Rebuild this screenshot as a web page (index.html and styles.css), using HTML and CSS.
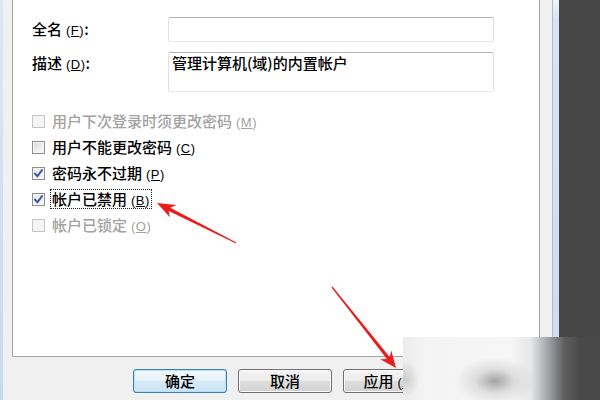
FILE: index.html
```html
<!DOCTYPE html>
<html lang="zh-CN">
<head>
<meta charset="utf-8">
<title>属性</title>
<link rel="stylesheet" href="styles.css">
</head>
<body>
<div class="edge-left"></div>
<div class="dialog">
  <div class="panel">
    <div class="field">
      <span class="label">全名<span class="mn">(<u>F</u>)</span>:</span>
      <div class="input"></div>
    </div>
    <div class="field field-desc">
      <span class="label">描述<span class="mn">(<u>D</u>)</span>:</span>
      <div class="input textarea">管理计算机(域)的内置帐户</div>
    </div>
    <ul class="checks">
      <li class="check disabled"><span class="box"></span><span class="text">用户下次登录时须更改密码<span class="mn">(<u>M</u>)</span></span></li>
      <li class="check"><span class="box"></span><span class="text">用户不能更改密码<span class="mn">(<u>C</u>)</span></span></li>
      <li class="check checked"><span class="box"><svg class="tick" viewBox="0 0 9 9" width="9" height="9"><path d="M1 4.6 L3.4 7.2 L8 1.2" /></svg></span><span class="text">密码永不过期<span class="mn">(<u>P</u>)</span></span></li>
      <li class="check checked focus"><span class="box"><svg class="tick" viewBox="0 0 9 9" width="9" height="9"><path d="M1 4.6 L3.4 7.2 L8 1.2" /></svg></span><span class="text">帐户已禁用<span class="mn">(<u>B</u>)</span></span></li>
      <li class="check disabled"><span class="box"></span><span class="text">帐户已锁定<span class="mn">(<u>O</u>)</span></span></li>
    </ul>
  </div>
  <div class="buttons">
    <button class="btn default">确定</button>
    <button class="btn">取消</button>
    <button class="btn">应用<span class="mn">(<u>A</u>)</span></button>
  </div>
</div>
<div class="edge-right"></div>
<div class="desktop"></div>
<svg class="arrows" width="600" height="400" viewBox="0 0 600 400">
  <polygon class="arrow" points="157,203 176.3,204.9 170.3,207.7 236.4,242.6 236,243.6 168.7,210.9 169.9,217.3"/>
  <polygon class="arrow" points="396,368 391.3,350.6 389.7,356.9 332.5,286.6 331.5,287.4 386.9,359.1 380.3,359.2"/>
</svg>
<div class="blur"></div>
</body>
</html>
```

FILE: styles.css
```css
html, body {
  margin: 0;
  padding: 0;
}

body {
  width: 600px;
  height: 400px;
  overflow: hidden;
  position: relative;
  display: flex;
  background: #474747;
  font-family: "Noto Sans CJK SC", "Noto Sans", sans-serif;
  font-size: 15px;
  font-weight: 500;
  color: #000;
}

.edge-left {
  flex: none;
  width: 3px;
  background: linear-gradient(to bottom, #dbe7f5, #c6daf1);
}

.dialog {
  flex: none;
  box-sizing: border-box;
  width: 550px;
  height: 400px;
  background: #f0f0f0;
  border-right: 1px solid #b9b9b9;
  display: flex;
  flex-direction: column;
}

.edge-right {
  flex: none;
  width: 6px;
  background: linear-gradient(to bottom, #eef4fb 0, #d6e5f6 20px, #c8dcf2 100%);
}

.desktop {
  flex: 1;
  background: #474747;
}

.panel {
  box-sizing: border-box;
  margin-left: 9px;
  width: 528px;
  height: 357px;
  background: #fff;
  border: 1px solid #a3a3a3;
  border-top: none;
  padding: 17px 0 0 19px;
}

.field {
  display: flex;
  align-items: flex-start;
  height: 25px;
}

.label {
  width: 136px;
  line-height: 23px;
  white-space: nowrap;
}

.mn {
  font-family: "Liberation Sans", "DejaVu Sans", sans-serif;
  font-size: 13px;
  font-weight: 400;
  line-height: 1;
  margin-left: 4px;
  letter-spacing: 0.5px;
}

.input {
  box-sizing: border-box;
  width: 326px;
  height: 25px;
  background: #fff;
  border: 1px solid;
  border-color: #b0b3ba #dde1e7 #e3e9ef #dde1e7;
  border-radius: 2px;
}

.field-desc {
  margin-top: 10px;
  height: 40px;
}

.field-desc .label {
  line-height: 21px;
}

.textarea {
  height: 40px;
  padding: 0 3px;
  line-height: 20px;
  color: #000;
}

.checks {
  list-style: none;
  margin: 16px 0 0;
  padding: 0;
}

.check {
  height: 26px;
  display: flex;
  align-items: center;
}

.check + .check {
  margin-top: 0;
}

.box {
  box-sizing: border-box;
  width: 13px;
  height: 13px;
  margin-right: 5px;
  border: 1px solid #8e8f8f;
  background: linear-gradient(135deg, #d6d6d6 0, #eeeeee 55%, #fbfbfb 100%);
  box-shadow: inset 0 0 0 1px #f6f6f6;
  display: flex;
  align-items: center;
  justify-content: center;
}

.checked .box {
  background: linear-gradient(135deg, #e8e8e8 0, #f8f8f8 100%);
}

.tick path {
  fill: none;
  stroke: #3a55a0;
  stroke-width: 1.9;
  stroke-linecap: square;
}

.text {
  line-height: 18px;
  padding: 0 1px;
  border: 1px dotted transparent;
  white-space: nowrap;
}

.focus .text {
  border-color: #222;
}

.disabled .box {
  border-color: #c4c4c4;
  background: #f4f4f4;
  box-shadow: none;
}

.disabled .text {
  color: #a2a2a2;
}

.buttons {
  display: flex;
  gap: 11px;
  padding: 12px 0 0 130px;
}

.btn {
  box-sizing: border-box;
  width: 94px;
  height: 24px;
  padding: 0;
  font-family: inherit;
  font-size: 15px;
  font-weight: 500;
  line-height: 20px;
  color: #000;
  border: 1px solid #707070;
  border-radius: 3px;
  background: linear-gradient(to bottom, #f4f4f4 0, #ececec 48%, #dedede 52%, #d2d2d2 100%);
  box-shadow: inset 0 0 0 1px #fbfbfb;
}

.btn.default {
  border-color: #3c7fb1;
  background: linear-gradient(to bottom, #f1f8fd 0, #e7f2fa 48%, #d7eaf6 52%, #cbe3f4 100%);
  box-shadow: inset 0 0 0 1px #b6e2f8;
}

.arrows {
  position: absolute;
  left: 0;
  top: 0;
  pointer-events: none;
}

.arrow {
  fill: #ec1c1c;
}

.blur {
  position: absolute;
  left: 403px;
  top: 337px;
  width: 197px;
  height: 63px;
  background:
    radial-gradient(ellipse 40px 24px at 92px 44px, rgba(150,150,150,0.85) 0, rgba(195,195,195,0.45) 50%, rgba(240,240,240,0) 100%),
    radial-gradient(ellipse 14px 18px at 2px 42px, rgba(190,190,190,0.7) 0, rgba(230,230,230,0) 100%),
    linear-gradient(to right, #ececec 0, #f4f4f4 12%, #f6f6f6 55%, #e6e6e6 65%, #a6a9ae 73%, #5e5e5e 82%, #484848 90%);
}
```
